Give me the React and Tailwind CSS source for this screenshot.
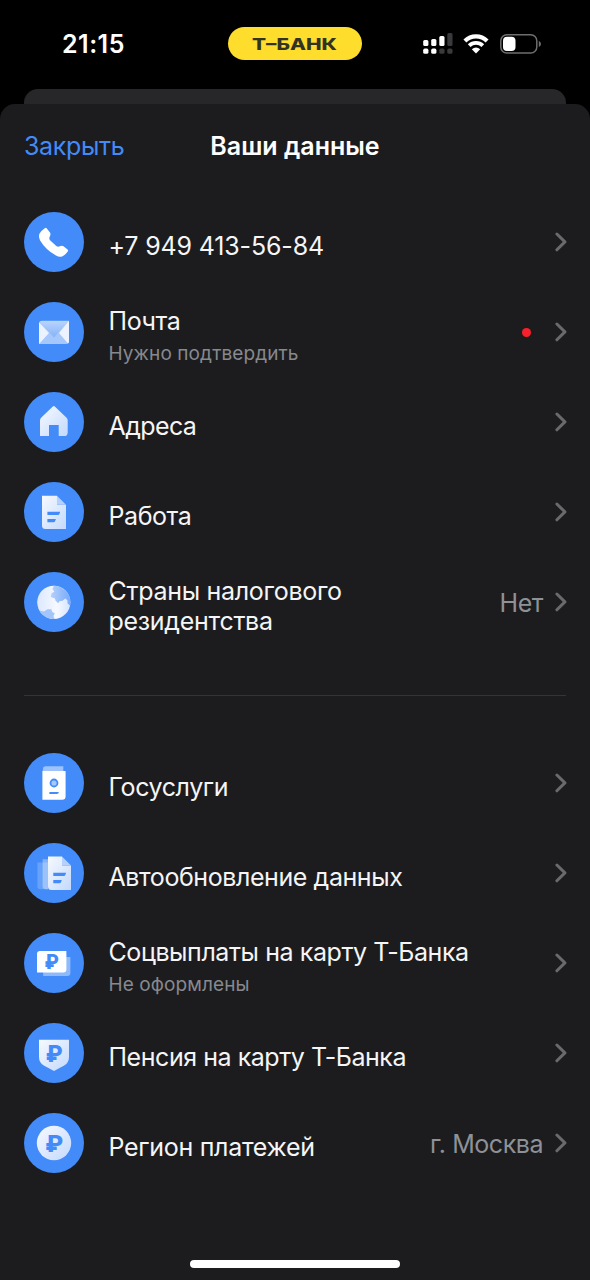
const ACCENT = "#428bf9";

function Ruble({ x = 30, y, size }) {
  return (
    <text
      x={x}
      y={y}
      textAnchor="middle"
      fontSize={size}
      fill={ACCENT}
      className="font-['Roboto',sans-serif] font-black"
    >
      ₽
    </text>
  );
}

function PhoneIcon() {
  return (
    <path
      fill="#fff"
      d="M20.8 16.2Q21.8 15.2 22.8 16.4L26.2 20.8Q26.8 22.4 26 24Q24.6 26.6 26 28.2L32.3 33.9Q34 35.2 35.8 34.2Q37.5 33.2 39.5 34.2L43.6 37.4Q44.6 38.4 43.7 39.5Q41.5 42.9 38.5 44.3Q35.5 45.6 32 43.6Q21.5 37.5 16.1 28.4Q14.2 24.5 15.6 21.4Q17.5 18.4 20.8 16.2Z"
    />
  );
}

function MailIcon() {
  return (
    <>
      <path fill="#a5c7fc" d="M18 18.8H45V39Q45 42 42 42H15V21.8Q15 18.8 18 18.8Z" />
      <path fill="url(#flap)" d="M15.6 20L30 35.5L44.6 19H18Q16.4 19 15.6 20Z" />
      <path fill="#edf3fe" d="M15 20.2L25 31L15 42ZM45 18.8V39Q45 40.8 44 41.4L35 31Z" />
    </>
  );
}

function HomeIcon() {
  return (
    <path
      fill="url(#soft)"
      d="M28.8 14.4Q29.8 13.6 30.8 14.4L42.6 25.8Q43.7 26.9 43.7 28.4V40.4Q43.7 44 40.2 44H34.7V33H25V44H16V28.4Q16 26.9 17.1 25.8Z"
    />
  );
}

function Lines({ dx = 0 }) {
  return (
    <g fill={ACCENT} transform={`translate(${dx} 0)`}>
      <path d="M23.4 29.7H36.2L35.5 31.7Q35.1 32.9 33.9 32.9H23.4Z" />
      <path d="M23.4 37H31.9L31.2 39Q30.8 40.2 29.6 40.2H23.4Z" />
    </g>
  );
}

function DocIcon() {
  return (
    <>
      <path fill="url(#soft)" d="M18 13.7H33V22.7H42V47H21.5Q18 47 18 43.5Z" />
      <path fill="#b4d0fb" d="M33 13.7L42 22.7H33Z" />
      <Lines />
    </>
  );
}

function GlobeIcon() {
  return (
    <>
      <circle cx="29.8" cy="30.3" r="16.6" fill="url(#land)" />
      <path
        fill="url(#sea)"
        d="M29.8 13.7C38 13.7 46.4 20.6 46.4 30.3L46 33.6L43.6 31.5L43.4 28.2L41.3 26.6L38.6 28.8L35.4 29.2L34.2 31.2L31.4 28.4L31 26.6L26.8 25L27.4 21.6L30.4 19.6L28.4 17.2Z"
      />
      <path
        fill="#a3c5fb"
        d="M15.4 38.6L20 39.4L23.4 37.2L27.4 37.2L28 39.8L30.8 41.4L29.4 44L30.6 46.9C24 47.4 18.2 44 15.4 38.6Z"
      />
    </>
  );
}

function PassportIcon() {
  return (
    <>
      <path fill="#9dc2fc" d="M21.5 13.2H39.3V18H19V15.7Q19 13.2 21.5 13.2Z" />
      <path fill="#fff" d="M18.4 17.4Q18.8 18 20.4 18H41.6V43.3Q41.6 46.8 38.1 46.8H18.4Z" />
      <circle cx="30" cy="30" r="3.5" fill="#a6c8fd" stroke={ACCENT} strokeWidth="1.8" />
      <path fill={ACCENT} d="M25.4 39H34.9Q34.6 41.1 32.9 41.1H25.4Z" />
    </>
  );
}

function DocsIcon() {
  return (
    <>
      <path fill="#fff" fillOpacity="0.2" d="M13.4 19.4H24V46.2H16.4Q13.4 46.2 13.4 43.2Z" />
      <path fill="#fff" fillOpacity="0.35" d="M18.6 16.3H24V46.2H21.6Q18.6 46.2 18.6 43.2Z" />
      <path fill="url(#soft)" d="M24 13.4H38V22.4H47V47H27.5Q24 47 24 43.5Z" />
      <path fill="#b4d0fb" d="M38 13.4L47 22.4H38Z" />
      <Lines dx={5.9} />
    </>
  );
}

function CardIcon() {
  return (
    <>
      <path fill="#8eb9fc" d="M19.2 24H46.4V40Q46.4 43 43.4 43H19.2Z" />
      <path fill="#fff" d="M16 18H42.4V36.4Q42.4 39.4 39.4 39.4H13V21Q13 18 16 18Z" />
      <Ruble x={27.8} y={35.8} size={19.5} />
    </>
  );
}

function ShieldIcon() {
  return (
    <>
      <path fill="url(#soft)" d="M15 16.7H45V34Q45 39.6 40.2 42.5L30 48L19.8 42.5Q15 39.6 15 34Z" />
      <Ruble x={30.4} y={39} size={23} />
    </>
  );
}

function CoinIcon() {
  return (
    <>
      <circle cx="30" cy="30" r="17.2" fill="url(#soft)" />
      <Ruble x={30.4} y={38.8} size={24.5} />
    </>
  );
}

function Chevron() {
  return (
    <svg width="12" height="20" viewBox="0 0 12 20" fill="none" className="-mr-px shrink-0">
      <path d="M1.9 2L9.9 9.9L1.9 17.8" stroke="#6a6a6c" strokeWidth="3" strokeLinecap="round" strokeLinejoin="round" />
    </svg>
  );
}

function Row({ icon: Icon, title, subtitle, value, dot, tracking = "tracking-[-0.42px]" }) {
  return (
    <li className="flex h-[90px] items-center">
      <svg width="60" height="60" viewBox="0 0 60 60" className="shrink-0">
        <circle cx="30" cy="30" r="30" fill={ACCENT} />
        <Icon />
      </svg>
      <div className="ml-[24.5px] grow pt-[7px]">
        <p className={`text-[25px] leading-[30px] whitespace-pre-line text-[#f5f5f6] ${tracking}`}>{title}</p>
        {subtitle && (
          <p className="mt-1.5 -mb-px text-[19px] leading-6 tracking-[0.1px] text-[#87898e]">{subtitle}</p>
        )}
      </div>
      {value && (
        <span className="mr-3 pt-0.5 text-[25px] leading-[30px] tracking-[-0.45px] text-[#8e9197]">{value}</span>
      )}
      {dot && <span className="mr-6 size-[9px] rounded-full bg-[#f9202b]" />}
      <Chevron />
    </li>
  );
}

const personal = [
  { icon: PhoneIcon, title: "+7 949 413-56-84", tracking: "tracking-[-0.15px]" },
  { icon: MailIcon, title: "Почта", subtitle: "Нужно подтвердить", dot: true },
  { icon: HomeIcon, title: "Адреса", tracking: "tracking-[-0.6px]" },
  { icon: DocIcon, title: "Работа" },
  { icon: GlobeIcon, title: "Страны налогового\nрезидентства", value: "Нет", tracking: "tracking-[-0.3px]" },
];

const services = [
  { icon: PassportIcon, title: "Госуслуги" },
  { icon: DocsIcon, title: "Автообновление данных" },
  { icon: CardIcon, title: "Соцвыплаты на карту Т-Банка", subtitle: "Не оформлены" },
  { icon: ShieldIcon, title: "Пенсия на карту Т-Банка", tracking: "tracking-[-0.46px]" },
  { icon: CoinIcon, title: "Регион платежей", value: "г. Москва", tracking: "tracking-[-0.3px]" },
];

function StatusBar() {
  return (
    <div className="flex h-[89px] items-start">
      <span className="mt-[29px] ml-[62px] w-[166px] text-[25px] leading-[30px] font-semibold tracking-[0.5px] text-white">
        21:15
      </span>
      <div className="mt-[27px] flex h-[33px] w-[134px] items-center justify-center rounded-full bg-[#ffdd2d]">
        <svg width="94" height="24" viewBox="0 0 94 24">
          <text
            x="4"
            y="18"
            fontSize="16.5"
            textLength="85"
            lengthAdjust="spacingAndGlyphs"
            fill="#333322"
            className="font-['Inter',sans-serif] font-extrabold"
          >
            Т–БАНК
          </text>
        </svg>
      </div>
      <div className="mt-[33px] ml-[61px] flex">
        <svg width="30" height="21" viewBox="0 0 30 21">
          <g fill="#fff">
            <rect x="0.2" y="7" width="5.2" height="6" rx="1.5" />
            <rect x="8.2" y="6" width="5.2" height="7" rx="1.5" />
            <rect x="16.3" y="3" width="5.2" height="10" rx="1.5" />
            <rect x="0.2" y="15.6" width="5.2" height="5.2" rx="1.6" />
            <rect x="8.2" y="15.6" width="5.2" height="5.2" rx="1.6" />
          </g>
          <g fill="#3a3a3c">
            <rect x="24.3" y="0" width="5.2" height="13" rx="1.5" />
            <rect x="16.3" y="15.6" width="5.2" height="5.2" rx="1.6" />
            <rect x="24.3" y="15.6" width="5.2" height="5.2" rx="1.6" />
          </g>
        </svg>
        <svg width="26" height="20" viewBox="0 0 26 20" className="mt-px ml-2.5" fill="none" stroke="#fff">
          <path d="M1.9 6.9A15.8 15.8 0 0 1 24.1 6.9" strokeWidth="4.2" />
          <path d="M6.2 11.7A9.7 9.7 0 0 1 19.8 11.7" strokeWidth="3.8" />
          <path d="M13 19.5L8.8 15.3Q13 11.8 17.2 15.3Z" fill="#fff" stroke="none" />
        </svg>
        <svg width="42" height="20" viewBox="0 0 42 20" className="mt-px ml-[11px]">
          <rect x="0.8" y="0.8" width="36" height="18.2" rx="6" fill="none" stroke="#6e6e70" strokeWidth="1.5" />
          <rect x="3" y="2.8" width="12.5" height="14.2" rx="4" fill="#fff" />
          <path d="M38.8 6.8Q41 8 41 9.9Q41 11.8 38.8 13Z" fill="#6e6e70" />
        </svg>
      </div>
    </div>
  );
}

function App() {
  return (
    <div className="flex h-[1280px] w-[590px] flex-col overflow-hidden bg-black font-['Inter','Noto_Sans',sans-serif]">
      {/* Gradients shared by the row icons */}
      <svg width="0" height="0" className="absolute">
        <defs>
          <linearGradient id="soft" x1="0" y1="0" x2="1" y2="1">
            <stop offset="0" stopColor="#f7faff" />
            <stop offset="1" stopColor="#c3d9fc" />
          </linearGradient>
          <linearGradient id="flap" x1="0" y1="0" x2="0" y2="1">
            <stop offset="0" stopColor="#b9d3fc" />
            <stop offset="1" stopColor="#84b2fa" />
          </linearGradient>
          <linearGradient id="land" x1="0" y1="0" x2="1" y2="0">
            <stop offset="0" stopColor="#dbe8fe" />
            <stop offset="0.6" stopColor="#f6f9ff" />
            <stop offset="1" stopColor="#d3e3fd" />
          </linearGradient>
          <linearGradient id="sea" x1="0" y1="0" x2="1" y2="0">
            <stop offset="0" stopColor="#b5d0fc" />
            <stop offset="1" stopColor="#77aafa" />
          </linearGradient>
        </defs>
      </svg>

      <StatusBar />

      {/* Sheet underneath */}
      <div className="mx-6 h-[15px] shrink-0 rounded-t-[14px] bg-[#272729]" />

      <main className="flex grow flex-col rounded-t-[15px] bg-[#1c1c1e] px-6">
        <header className="grid h-[93px] grid-cols-[1fr_auto_1fr] items-start pt-[27px] text-[25px] leading-[30px]">
          <button className="justify-self-start tracking-[-0.35px] text-[#428bf9]">Закрыть</button>
          <h1 className="font-semibold text-white">Ваши данные</h1>
        </header>
        <ul>
          {personal.map((item) => (
            <Row key={item.title} {...item} />
          ))}
        </ul>
        <div className="mt-12 mb-[42px] h-px shrink-0 bg-[#343436]" />
        <ul>
          {services.map((item) => (
            <Row key={item.title} {...item} />
          ))}
        </ul>
        <div className="mt-auto mb-3 h-2 w-[210px] self-center rounded-full bg-white" />
      </main>
    </div>
  );
}

export default App;
